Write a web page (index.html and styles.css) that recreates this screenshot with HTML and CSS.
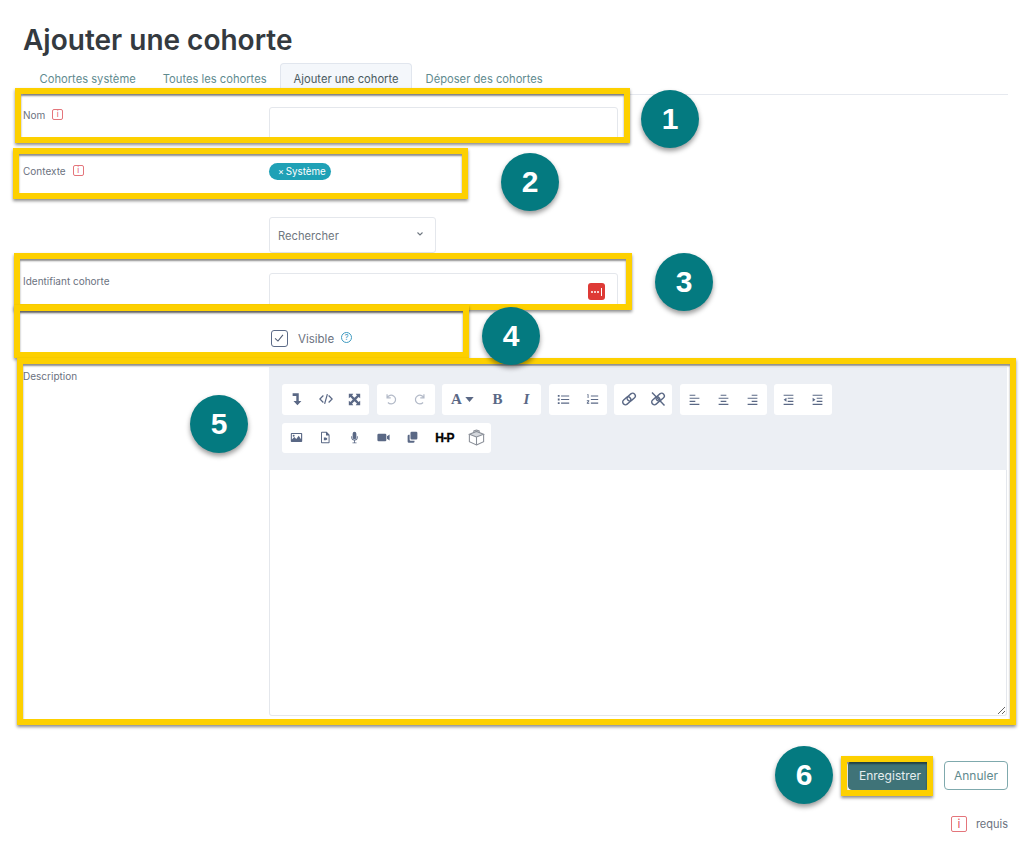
FILE: index.html
```html
<!DOCTYPE html>
<html lang="fr">
<head>
<meta charset="utf-8">
<title>Ajouter une cohorte</title>
<link rel="stylesheet" href="styles.css">
</head>
<body>
<main class="page">
  <h1 class="title">Ajouter une cohorte</h1>
  <nav class="tabs">
    <a class="tab">Cohortes système</a>
    <a class="tab">Toutes les cohortes</a>
    <a class="tab active">Ajouter une cohorte</a>
    <a class="tab">Déposer des cohortes</a>
  </nav>
  <form class="form">
    <div class="row">
      <div class="label">Nom <span class="req">i</span></div>
      <input class="input" type="text">
    </div>
    <div class="row row-small">
      <div class="label label-tight">Contexte <span class="req">i</span></div>
      <div class="pill-line"><span class="pill"><span class="pill-x">×</span> Système</span></div>
    </div>
    <div class="row row-search">
      <div></div>
      <div class="select">Rechercher
        <svg class="chev" viewBox="0 0 8 6"><path d="M1.5 1.5 4 4l2.5-2.5" fill="none" stroke="currentColor" stroke-width="1.1"/></svg>
      </div>
    </div>
    <div class="row">
      <div class="label">Identifiant cohorte</div>
      <div class="input-wrap">
        <input class="input" type="text">
        <span class="lp"><i></i><i></i><i></i><b></b></span>
      </div>
    </div>
    <div class="row row-small row-visible">
      <div></div>
      <div class="check-line">
        <span class="check"><svg viewBox="0 0 16 16"><path d="M3.5 8.5 6.8 11.5 12.5 4.5" fill="none" stroke="currentColor" stroke-width="1.2"/></svg></span>
        <span class="check-text">Visible</span>
        <span class="help">?</span>
      </div>
    </div>
    <div class="row">
      <div class="label label-desc">Description</div>
      <div class="editor">
        <div class="toolbar">
          <div class="tool-row">
            <div class="group">
              <span class="btn"><svg class="ic ic-big" viewBox="0 0 16 16"><path d="M3 1.500h7v8.700h3l-4.500 5-4.500-5h3.200V4.500H3z"/></svg></span>
              <span class="btn"><svg class="ic ic-big ic-line" viewBox="0 0 16 16"><path d="M5 4 1 8l4 4M11 4l4 4-4 4M9.600 2.500 6.400 13.500"/></svg></span>
              <span class="btn"><svg class="ic" viewBox="0 0 16 16"><path d="M1 1h5.500L5 3l2.900 2.900L11 3 9.500 1H15v5.500L13 5l-2.900 3L13 11l2-1.500V15H9.500L11 13l-3-2.900L5 13l1.500 2H1V9.500L3 11l2.900-3L3 5 1 6.500z"/></svg></span>
            </div>
            <div class="group">
              <span class="btn off"><svg class="ic ic-big ic-line" viewBox="0 0 16 16"><path d="M3.500 2.500v4.200h4.200M3.700 6.500A5 5 0 1 1 4.500 12"/></svg></span>
              <span class="btn off"><svg class="ic ic-big ic-line" viewBox="0 0 16 16"><path d="M12.500 2.500v4.200H8.300M12.300 6.500A5 5 0 1 0 11.500 12"/></svg></span>
            </div>
            <div class="group">
              <span class="btn btn-a"><span class="glyph glyph-a">A</span><svg class="caret" viewBox="0 0 10 6"><path d="M0 0h10L5 6z"/></svg></span>
              <span class="btn"><span class="glyph">B</span></span>
              <span class="btn"><span class="glyph glyph-i">I</span></span>
            </div>
            <div class="group">
              <span class="btn"><svg class="ic" viewBox="0 0 16 16"><path d="M1 2.500h2.200v2.200H1zM1 6.900h2.200v2.200H1zM1 11.300h2.200v2.200H1zM5 3h10v1.400H5zM5 7.300h10v1.400H5zM5 11.700h10v1.400H5z"/></svg></span>
              <span class="btn"><svg class="ic" viewBox="0 0 16 16"><path d="M1.500 1.500h1.600v4.700H2V2.600h-.5zM1 9h3v1.200L2.400 12H4v1.200H1V12l1.800-1.800H1zM6 3h9v1.400H6zM6 7.300h9v1.400H6zM6 11.700h9v1.400H6z"/></svg></span>
            </div>
            <div class="group">
              <span class="btn"><svg class="ic ic-line ic-link" viewBox="0 0 16 16"><g transform="rotate(-40 8 8)"><rect x=".6" y="5.300" width="9" height="5.400" rx="2.700"/><rect x="6.400" y="5.300" width="9" height="5.400" rx="2.700"/></g></svg></span>
              <span class="btn"><svg class="ic ic-line ic-link" viewBox="0 0 16 16"><g transform="rotate(-40 8 8)"><rect x=".6" y="5.300" width="9" height="5.400" rx="2.700"/><rect x="6.400" y="5.300" width="9" height="5.400" rx="2.700"/></g><path d="M2 1.500 14.500 14.500"/></svg></span>
            </div>
            <div class="group">
              <span class="btn"><svg class="ic" viewBox="0 0 16 16"><path d="M2 2h7v1.400H2zM2 5.800h12v1.400H2zM2 9.600h7v1.400H2zM2 13.300h12v1.400H2z"/></svg></span>
              <span class="btn"><svg class="ic" viewBox="0 0 16 16"><path d="M4.500 2h7v1.400h-7zM2 5.800h12v1.400H2zM4.500 9.600h7v1.400h-7zM2 13.300h12v1.400H2z"/></svg></span>
              <span class="btn"><svg class="ic" viewBox="0 0 16 16"><path d="M7 2h7v1.400H7zM2 5.800h12v1.400H2zM7 9.600h7v1.400H7zM2 13.300h12v1.400H2z"/></svg></span>
            </div>
            <div class="group">
              <span class="btn"><svg class="ic" viewBox="0 0 16 16"><path d="M2 2h12v1.400H2zM7 5.800h7v1.400H7zM7 9.600h7v1.400H7zM2 13.300h12v1.400H2zM5.500 5.700v5L2 8.200z"/></svg></span>
              <span class="btn"><svg class="ic" viewBox="0 0 16 16"><path d="M2 2h12v1.400H2zM7 5.800h7v1.400H7zM7 9.600h7v1.400H7zM2 13.300h12v1.400H2zM2 5.700v5l3.500-2.500z"/></svg></span>
            </div>
          </div>
          <div class="tool-row">
            <div class="group">
              <span class="btn"><svg class="ic" viewBox="0 0 16 16"><path fill-rule="evenodd" d="M2 2.500h12a1 1 0 0 1 1 1v9a1 1 0 0 1-1 1H2a1 1 0 0 1-1-1v-9a1 1 0 0 1 1-1zm.3 1.300v6.700l3-3 2.400 2.400 3-4 2.900 4.300V3.800zM4.500 4.700a1.200 1.200 0 1 1 0 2.400 1.200 1.200 0 0 1 0-2.400z"/></svg></span>
              <span class="btn"><svg class="ic" viewBox="0 0 16 16"><path fill-rule="evenodd" d="M3.500 1h6l3.500 3.500V14a1 1 0 0 1-1 1h-8.500a1 1 0 0 1-1-1V2a1 1 0 0 1 1-1zm.2 1.200v11.600h8.100V5.400H8.600V2.200zM6 8h2.500v1L10 8v3.500L8.500 10.500v1H6z"/></svg></span>
              <span class="btn"><svg class="ic" viewBox="0 0 16 16"><path d="M8 1a2.300 2.300 0 0 1 2.300 2.300v4.400a2.300 2.300 0 0 1-4.600 0V3.300A2.300 2.300 0 0 1 8 1zM4 6.500h1v1.300a3 3 0 0 0 6 0V6.500h1v1.300a4 4 0 0 1-3.500 4V14h2v1h-5v-1h2v-2.200A4 4 0 0 1 4 7.800z"/></svg></span>
              <span class="btn"><svg class="ic" viewBox="0 0 16 16"><path d="M2 3.500h8a1.500 1.500 0 0 1 1.500 1.500v6A1.500 1.500 0 0 1 10 12.500H2A1.500 1.500 0 0 1 .5 11V5A1.500 1.500 0 0 1 2 3.500zM12.300 6.500l3.200-2.200v7.400l-3.200-2.200z"/></svg></span>
              <span class="btn"><svg class="ic" viewBox="0 0 16 16"><path d="M7 1h5.500A1.500 1.500 0 0 1 14 2.500V9a1.500 1.500 0 0 1-1.500 1.500H7A1.500 1.500 0 0 1 5.500 9V2.500A1.500 1.500 0 0 1 7 1zM4.500 4.500V11A1 1 0 0 0 5.500 12h5v1A1.500 1.500 0 0 1 9 14.500H3.500A1.500 1.500 0 0 1 2 13V6A1.500 1.500 0 0 1 3.500 4.500z"/></svg></span>
              <span class="btn btn-h5p"><span class="h5p">H-P</span></span>
              <span class="btn"><svg class="ic-cube" viewBox="0 0 16 16"><path class="cube-top" d="M8 7.500 1.300 4.900 8 2.300l6.700 2.600z"/><path d="M1.300 4.900v7L8 15V7.500M14.700 4.900v7L8 15M5.500 3.300V1.800L8 .9l2.500.9v1.500"/></svg></span>
            </div>
          </div>
        </div>
        <textarea class="area"></textarea>
      </div>
    </div>
    <div class="actions">
      <span class="action action-primary">Enregistrer</span>
      <span class="action action-cancel">Annuler</span>
    </div>
    <div class="legend"><span class="req req-big">i</span> requis</div>
  </form>
</main>

<div class="mark mark-1"></div>
<div class="mark mark-2"></div>
<div class="mark mark-3"></div>
<div class="mark mark-4"></div>
<div class="mark mark-5"></div>
<div class="mark mark-6"></div>
<div class="num num-1">1</div>
<div class="num num-2">2</div>
<div class="num num-3">3</div>
<div class="num num-4">4</div>
<div class="num num-5">5</div>
<div class="num num-6">6</div>
</body>
</html>
```
FILE: styles.css
```css
* { box-sizing: border-box; }
html, body { margin: 0; padding: 0; height: 850px; overflow: hidden; background: #fff; }
body { position: relative; font-family: Inter, "Liberation Sans", sans-serif; color: #6b7280; }

.page { padding: 0 16px 0 23px; }

.title {
  margin: 0;
  padding-top: 23px;
  height: 63px;
  font-size: 28px;
  line-height: 34px;
  font-weight: 600;
  color: #343a40;
}

.tabs {
  display: flex;
  height: 32px;
  padding-left: 3px;
  border-bottom: 1px solid #e6e9ef;
  font-size: 11.200px;
}
.tab {
  height: 31px;
  padding: 0 12.500px;
  line-height: 30px;
  color: #5f8b8f;
  border: 1px solid transparent;
  border-bottom: 0;
  border-radius: 4px 4px 0 0;
  white-space: nowrap;
}
.tab.active { color: #4a5a60; background: #f4f7fb; border-color: #e1e6ee; }

.form { display: flex; flex-direction: column; gap: 20px; padding-top: 12px; }
.row { display: grid; grid-template-columns: 246px 1fr; }
.row-small { height: 17px; }
.row-search { margin-top: 17px; }
.row-visible { margin-top: 1px; }

.label { font-size: 10px; line-height: 16px; color: #6b7280; display: flex; align-items: flex-start; gap: 7px; }
.label-tight { line-height: 17px; }
.label-desc { margin-top: 1px; }

.req {
  display: inline-block;
  width: 11px;
  height: 11px;
  margin-top: 2px;
  border: 1px solid #e4757b;
  border-radius: 2px;
  color: #e4575f;
  font-size: 8px;
  line-height: 9px;
  text-align: center;
}
.req-big { width: 16px; height: 16px; margin: 0; font-size: 12px; line-height: 14px; }

.input {
  display: block;
  width: 349px;
  height: 36px;
  padding: 0;
  border: 1px solid #e4e7ec;
  border-radius: 3px;
  background: #fff;
}
.input-wrap { position: relative; width: 349px; }

.lp {
  position: absolute;
  left: 319px;
  top: 10px;
  width: 17px;
  height: 17px;
  display: flex;
  align-items: center;
  justify-content: center;
  gap: 1px;
  background: #de3a36;
  border-radius: 3px;
}
.lp i { width: 2px; height: 2px; border-radius: 50%; background: #fff; }
.lp b { width: 1px; height: 8px; margin-left: 1px; background: #fff; }

.pill-line { display: flex; }
.pill {
  display: block;
  height: 17px;
  padding: 0 5px 0 9px;
  border-radius: 9px;
  background: #1fa1b6;
  color: #fff;
  font-size: 9.800px;
  line-height: 17px;
  white-space: nowrap;
}
.pill-x { font-size: 9px; margin-right: -1px; }

.select {
  position: relative;
  width: 167px;
  height: 36px;
  padding-left: 8px;
  border: 1px solid #e4e7ec;
  border-radius: 3px;
  font-size: 11.200px;
  line-height: 36px;
  color: #6f7780;
}
.chev { position: absolute; left: 146px; top: 13px; width: 8px; height: 6px; color: #6f7780; }

.check-line { display: flex; align-items: center; height: 17px; padding-left: 2px; }
.check {
  width: 17px;
  height: 17px;
  border: 1.500px solid #5c6b88;
  border-radius: 3px;
  color: #4d5a73;
}
.check svg { display: block; width: 14px; height: 14px; }
.check-text { margin-left: 10px; font-size: 11.500px; color: #6b7280; }
.help {
  width: 11px;
  height: 11px;
  margin-left: 7px;
  margin-top: -2px;
  border: 1px solid #3e9ac0;
  border-radius: 50%;
  color: #3e9ac0;
  font-size: 8px;
  line-height: 9px;
  text-align: center;
}

.editor { display: flex; flex-direction: column; width: 738px; height: 349px; }
.toolbar {
  display: flex;
  flex-direction: column;
  gap: 8px;
  height: 103px;
  padding: 17px 0 0 13px;
  background: #eceff4;
}
.tool-row { display: flex; gap: 7.500px; }
.group { display: flex; height: 30.500px; background: #fff; border-radius: 3px; }
.btn { display: flex; align-items: center; justify-content: center; width: 29px; color: #5a6885; }
.btn.off { color: #b3bac8; }
.btn-a { width: 41px; gap: 3px; }
.btn-h5p { width: 35px; }
.ic { display: block; width: 13px; height: 13px; fill: currentColor; }
.ic-big { width: 14px; height: 14px; }
.ic-line { fill: none; stroke: currentColor; stroke-width: 1.400; }
.ic-link { width: 16px; height: 16px; stroke-width: 1.400; }
.ic-cube { display: block; width: 17px; height: 17px; fill: none; stroke: #8a8f98; stroke-width: 1; }
.cube-top { fill: #d5d8dd; }
.glyph { font-family: "Liberation Serif", serif; font-weight: 700; font-size: 15px; line-height: 1; }
.glyph-a { font-size: 15px; }
.glyph-i { font-style: italic; }
.caret { width: 9px; height: 5px; fill: currentColor; }
.h5p { font-family: "Liberation Sans", sans-serif; font-weight: 700; font-size: 12px; letter-spacing: -0.700px; color: #000; -webkit-text-stroke: .3px #000; }

.area {
  display: block;
  flex: 1;
  width: 100%;
  padding: 0;
  border: 1px solid #e4e7ec;
  border-top: 0;
  border-radius: 0 0 3px 3px;
  background: #fff;
  resize: vertical;
}

.actions { display: flex; justify-content: flex-end; align-items: center; gap: 14px; height: 30px; margin-top: 24px; }
.action { height: 29px; border-radius: 4px; font-size: 12px; line-height: 27px; text-align: center; }
.action-primary { width: 82px; padding-left: 2px; background: #3f7378; color: #e6eeef; border: 1px solid #3f7378; }
.action-cancel { width: 64px; color: #5f8a8e; border: 1px solid #7fa9ad; }

.legend {
  display: flex;
  justify-content: flex-end;
  align-items: center;
  gap: 9px;
  margin-top: 6px;
  font-size: 11px;
  color: #6b7280;
}

.mark {
  position: absolute;
  border: 6px solid #fdd000;
  box-shadow: 0 2px 3px rgba(0, 0, 0, .45), inset 0 2px 2px rgba(0, 0, 0, .45);
}
.mark-1 { left: 15px; top: 88px; width: 615px; height: 55px; }
.mark-2 { left: 13px; top: 148px; width: 455px; height: 51px; }
.mark-3 { left: 14px; top: 253px; width: 618px; height: 57px; }
.mark-4 { left: 14px; top: 305px; width: 455px; height: 53px; }
.mark-5 { left: 17px; top: 358px; width: 999px; height: 367px; }
.mark-6 { left: 841px; top: 756px; width: 92px; height: 40px; }

.num {
  position: absolute;
  width: 58px;
  height: 58px;
  border-radius: 50%;
  background: #047a80;
  box-shadow: 0 3px 5px rgba(0, 0, 0, .4);
  color: #fff;
  font-family: "Liberation Sans", sans-serif;
  font-weight: 700;
  font-size: 30px;
  line-height: 58px;
  text-align: center;
}
.num-1 { left: 641px; top: 90px; }
.num-2 { left: 501px; top: 153px; }
.num-3 { left: 655px; top: 253px; }
.num-4 { left: 482px; top: 307px; }
.num-5 { left: 190px; top: 395px; }
.num-6 { left: 775px; top: 746px; }
```
